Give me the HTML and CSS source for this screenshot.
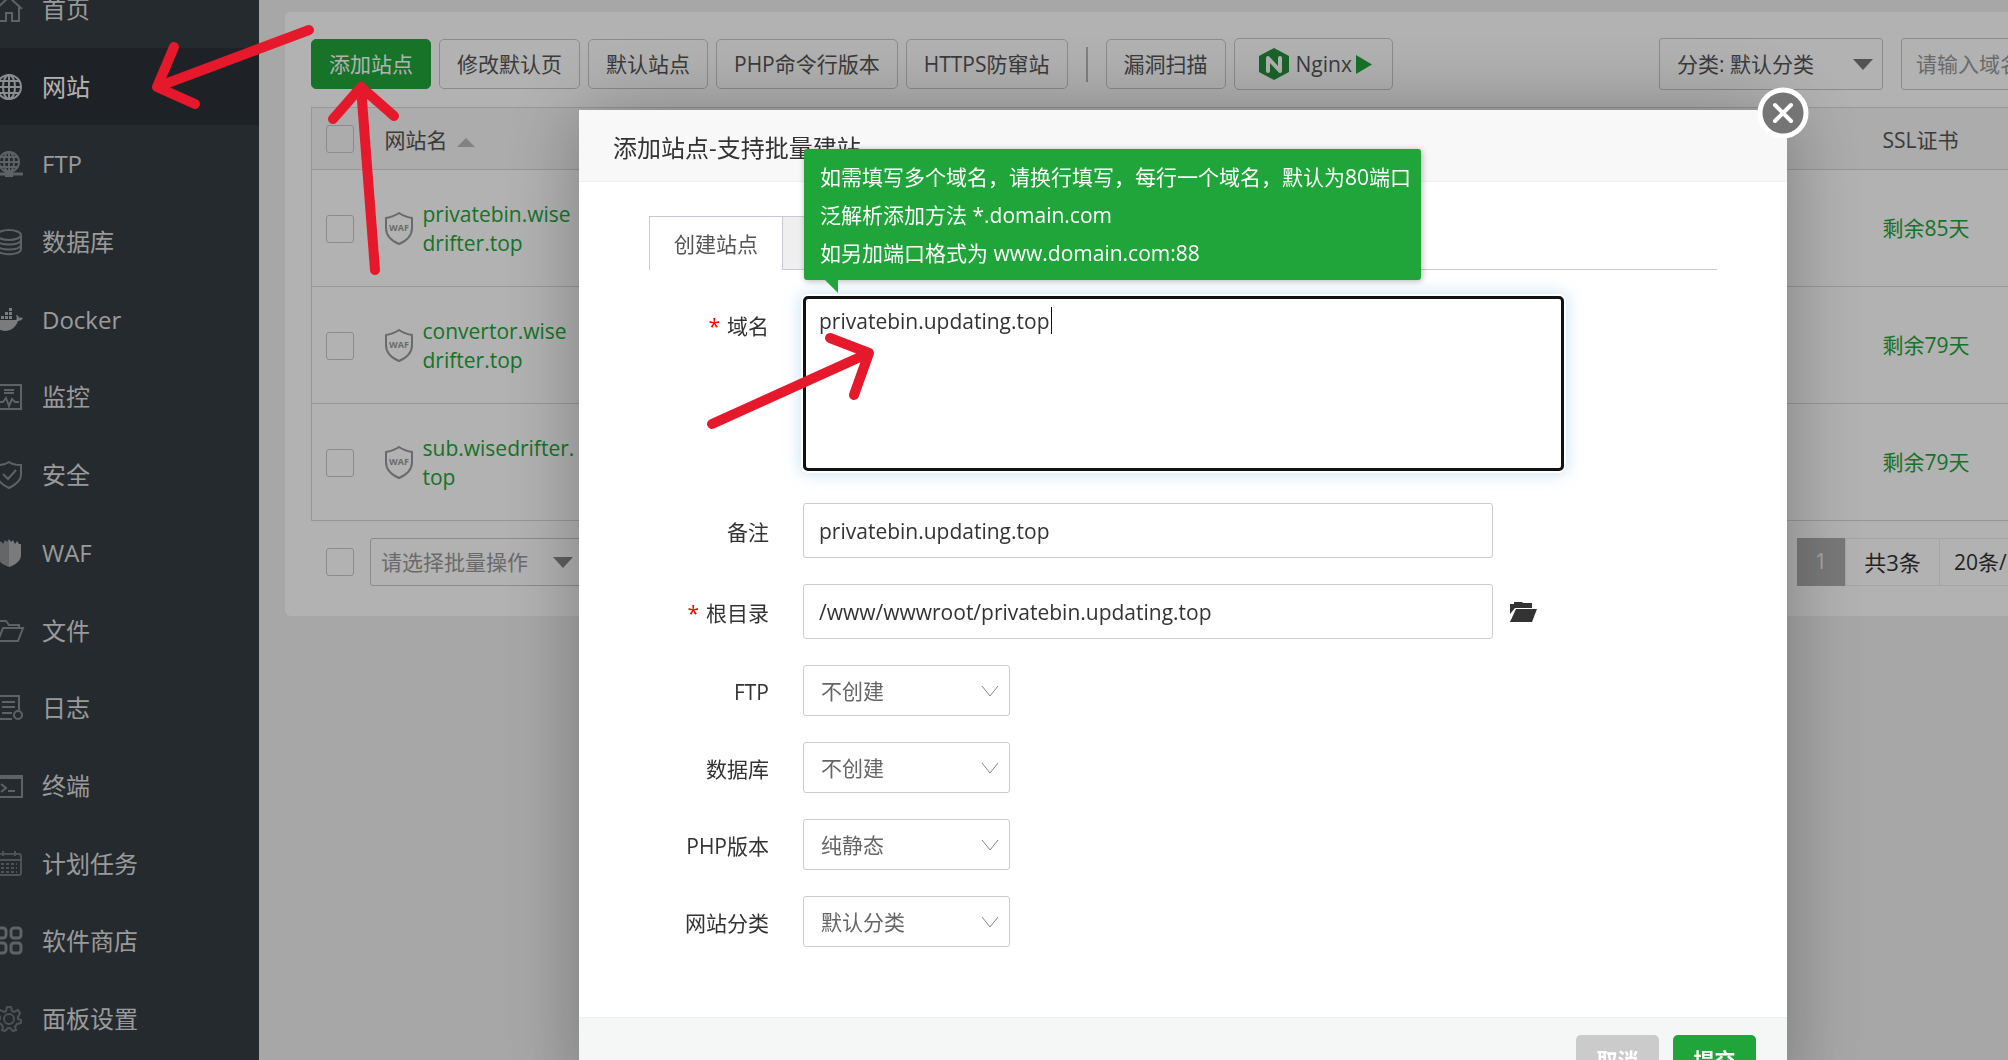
FILE: index.html
```html
<!DOCTYPE html>
<html lang="zh-CN">
<head>
<meta charset="utf-8">
<title>网站 - 添加站点</title>
<link rel="stylesheet" href="styles.css">
</head>
<body>
<div class="app">
  <aside class="sidebar">
    <nav class="nav">
      <a class="nav-item" href="#"><svg class="nav-icon" viewBox="0 0 28 28"><path d="M1 14 14 2l13 12M4 12v14h7v-8h6v8h7V12"/></svg>首页</a>
      <a class="nav-item active" href="#"><svg class="nav-icon bright" viewBox="0 0 28 28"><circle cx="14" cy="14" r="12"/><ellipse cx="14" cy="14" rx="6" ry="12"/><path d="M14 2v24M2 14h24M4 8h20M4 20h20"/></svg>网站</a>
      <a class="nav-item" href="#"><svg class="nav-icon" viewBox="0 0 28 28"><circle cx="14" cy="12" r="10"/><ellipse cx="14" cy="12" rx="5" ry="10"/><path d="M14 2v20M4 12h20M5 7h18M5 17h18"/><path d="M0 24h28" stroke-width="3"/><path d="M10 24h8" stroke-width="6"/></svg>FTP</a>
      <a class="nav-item" href="#"><svg class="nav-icon" viewBox="0 0 28 28"><ellipse cx="14" cy="7" rx="12" ry="5"/><path d="M2 7v14c0 7 24 7 24 0V7M2 12c0 6 24 6 24 0M2 17c0 6 24 6 24 0"/></svg>数据库</a>
      <a class="nav-item" href="#"><svg class="nav-icon solid" viewBox="0 0 28 28"><path d="M0 14h21c1-1 1-3 0-5 2 0 3 2 3 3 1-1 3 0 4 0-1 2-3 3-5 3-2 6-7 10-13 10C4 25 0 21 0 14zM2 10h3v3H2zM6 10h3v3H6zM10 10h3v3h-3zM14 10h3v3h-3zM10 6h3v3h-3zM14 6h3v3h-3zM14 2h3v3h-3z"/></svg>Docker</a>
      <a class="nav-item" href="#"><svg class="nav-icon" viewBox="0 0 28 28"><path d="M2 2h24v24H2zM4 19h4l3-4 3 8 3-7 3 3h4M9 7h10M9 10h10"/></svg>监控</a>
      <a class="nav-item" href="#"><svg class="nav-icon" viewBox="0 0 28 28"><path d="M14 1c4 3 8 3 12 3v10c0 6-6 10-12 13C8 24 2 20 2 14V4c4 0 8 0 12-3zM8 13l5 5 8-9" stroke-width="2"/></svg>安全</a>
      <a class="nav-item" href="#"><svg class="nav-icon solid" viewBox="0 0 28 28"><path d="M14 0l2 3 2-2 2 4 2-3 2 3h2v11c0 6-6 10-12 12z"/><path opacity=".75" d="M14 0l-2 3-2-2-2 4-2-3-2 3H2v11c0 6 6 10 12 12z"/></svg>WAF</a>
      <a class="nav-item" href="#"><svg class="nav-icon" viewBox="0 0 28 28"><path d="M2 24V4h9l3 4h10v3M3 24l5-13h20l-5 13z"/></svg>文件</a>
      <a class="nav-item" href="#"><svg class="nav-icon" viewBox="0 0 28 28"><path d="M24 16V2H3v23h14M7 8h13M7 13h13M7 19h10"/><circle cx="23" cy="21" r="4" stroke-width="2"/></svg>日志</a>
      <a class="nav-item" href="#"><svg class="nav-icon" viewBox="0 0 28 28"><path d="M1 4h26v21H1zM6 12l5 4-5 4M13 19h7" stroke-width="2"/><path d="M1 5h26" stroke-width="4"/></svg>终端</a>
      <a class="nav-item" href="#"><svg class="nav-icon dim" viewBox="0 0 28 28"><rect x="2" y="4" width="24" height="21" rx="2"/><path d="M2 10h24M8 1v5M20 1v5"/><path d="M6 14h16M6 18h16M6 22h16" stroke-dasharray="3 2" stroke-width="2"/></svg>计划任务</a>
      <a class="nav-item" href="#"><svg class="nav-icon" viewBox="0 0 28 28"><g stroke-width="3"><rect x="1" y="1" width="10" height="10" rx="3"/><rect x="16" y="1" width="10" height="10" rx="3"/><rect x="1" y="16" width="10" height="10" rx="3"/><rect x="16" y="16" width="10" height="10" rx="3"/></g></svg>软件商店</a>
      <a class="nav-item" href="#"><svg class="nav-icon dim" viewBox="0 0 28 28"><circle cx="14" cy="14" r="5" stroke-width="2"/><path stroke-width="2" d="M12 2h4l1 4 2 1 4-2 2 3-2 4v2l3 1v3l-4 1-2 3 1 3-3 1-3-3h-2l-3 3-3-1 1-3-2-3-4-1v-3l3-1v-2L3 8l2-3 4 2 2-1z"/></svg>面板设置</a>
    </nav>
  </aside>

  <main class="main">
    <section class="panel">
      <div class="toolbar">
        <button class="btn btn-primary" type="button">添加站点</button>
        <button class="btn" type="button">修改默认页</button>
        <button class="btn" type="button">默认站点</button>
        <button class="btn" type="button">PHP命令行版本</button>
        <button class="btn" type="button">HTTPS防窜站</button>
        <span class="divider"></span>
        <button class="btn" type="button">漏洞扫描</button>
        <button class="btn btn-nginx" type="button"><svg class="nginx-logo" viewBox="0 0 30 32"><path fill="#278f3a" d="M15 0l15 8v16l-15 8L0 24V8z"/><path fill="none" stroke="#fff" stroke-width="4" stroke-linecap="round" stroke-linejoin="round" d="M9 23V10l12 13V10"/></svg>Nginx<svg class="play" viewBox="0 0 17 20"><path d="M0 0l17 10L0 20z"/></svg></button>
        <div class="filters">
          <span class="pick pick-category"><select aria-label="分类"><option>分类: 默认分类</option></select><svg class="caret" viewBox="0 0 20 11"><path d="M0 0h20L10 11z"/></svg></span>
          <input class="search" type="text" aria-label="搜索" placeholder="请输入域名或备注">
        </div>
      </div>

      <table class="sites">
        <colgroup><col class="col-check"><col class="col-name"><col><col class="col-ssl"></colgroup>
        <thead>
          <tr><th><input class="check" type="checkbox" aria-label="全选"></th><th>网站名 <svg class="sort" viewBox="0 0 18 9"><path d="M0 9h18L9 0z"/></svg></th><th></th><th>SSL证书</th></tr>
        </thead>
        <tbody>
          <tr><td><input class="check" type="checkbox" aria-label="privatebin.wisedrifter.top"></td><td><div class="site"><svg class="waf" viewBox="0 0 28 33"><path d="M14 1c4 3 8 4 13 5v10c0 8-6 13-13 16C7 29 1 24 1 16V6c5-1 9-2 13-5z"/><text x="14" y="19" text-anchor="middle">WAF</text></svg><a href="#">privatebin.wise<wbr>drifter.top</a></div></td><td></td><td><a href="#">剩余85天</a></td></tr>
          <tr><td><input class="check" type="checkbox" aria-label="convertor.wisedrifter.top"></td><td><div class="site"><svg class="waf" viewBox="0 0 28 33"><path d="M14 1c4 3 8 4 13 5v10c0 8-6 13-13 16C7 29 1 24 1 16V6c5-1 9-2 13-5z"/><text x="14" y="19" text-anchor="middle">WAF</text></svg><a href="#">convertor.wise<wbr>drifter.top</a></div></td><td></td><td><a href="#">剩余79天</a></td></tr>
          <tr><td><input class="check" type="checkbox" aria-label="sub.wisedrifter.top"></td><td><div class="site"><svg class="waf" viewBox="0 0 28 33"><path d="M14 1c4 3 8 4 13 5v10c0 8-6 13-13 16C7 29 1 24 1 16V6c5-1 9-2 13-5z"/><text x="14" y="19" text-anchor="middle">WAF</text></svg><a href="#">sub.wisedrifter.<wbr>top</a></div></td><td></td><td><a href="#">剩余79天</a></td></tr>
        </tbody>
      </table>

      <div class="table-foot">
        <input class="check" type="checkbox" aria-label="选择全部网站">
        <span class="pick pick-batch"><select aria-label="批量操作"><option>请选择批量操作</option></select><svg class="caret" viewBox="0 0 20 11"><path d="M0 0h20L10 11z"/></svg></span>
        <div class="pager">
          <a class="page-current" href="#">1</a>
          <span class="page-total">共3条</span>
          <select class="page-size" aria-label="每页条数"><option>20条/页</option></select>
        </div>
      </div>
    </section>
  </main>
</div>

<div class="shade"></div>

<div class="modal" role="dialog" aria-labelledby="modal-title">
  <header class="modal-head"><h2 id="modal-title">添加站点-支持批量建站</h2></header>
  <button class="close" type="button" aria-label="关闭"><svg viewBox="0 0 52 52"><circle cx="26" cy="26" r="23" fill="#757575" stroke="#fff" stroke-width="5"/><path d="M18 18l16 16M34 18L18 34" stroke="#fff" stroke-width="4" stroke-linecap="round"/></svg></button>

  <form class="modal-body">
    <div class="tabs">
      <button class="tab current" type="button">创建站点</button>
      <button class="tab tab-batch" type="button" aria-label="批量创建"></button>
    </div>

    <div class="field field-domain">
      <label for="domain"><span class="req">*</span>域名</label>
      <div class="domain-box">
        <textarea id="domain">privatebin.updating.top</textarea>
        <span class="text-caret"></span>
        <div class="tip">如需填写多个域名，请换行填写，每行一个域名，默认为80端口<br>泛解析添加方法 *.domain.com<br>如另加端口格式为 www.domain.com:88<svg class="tip-tail" viewBox="0 0 13 13"><path d="M0 0h13v13z"/></svg></div>
      </div>
    </div>
    <div class="field"><label for="note">备注</label><input id="note" class="text" type="text" value="privatebin.updating.top"></div>
    <div class="field"><label for="root"><span class="req">*</span>根目录</label><input id="root" class="text" type="text" value="/www/wwwroot/privatebin.updating.top"><button class="folder" type="button" aria-label="选择目录"><svg viewBox="0 0 27 20"><path d="M0 12V2h4V0h8l1 1h9v5H5z"/><path d="M6 7h21l-5 13H0z"/></svg></button></div>
    <div class="field"><label for="ftp">FTP</label><span class="choice"><select id="ftp"><option>不创建</option></select><svg viewBox="0 0 18 12"><path d="M1 1l8 10 8-10"/></svg></span></div>
    <div class="field"><label for="db">数据库</label><span class="choice"><select id="db"><option>不创建</option></select><svg viewBox="0 0 18 12"><path d="M1 1l8 10 8-10"/></svg></span></div>
    <div class="field"><label for="php">PHP版本</label><span class="choice"><select id="php"><option>纯静态</option></select><svg viewBox="0 0 18 12"><path d="M1 1l8 10 8-10"/></svg></span></div>
    <div class="field"><label for="type">网站分类</label><span class="choice"><select id="type"><option>默认分类</option></select><svg viewBox="0 0 18 12"><path d="M1 1l8 10 8-10"/></svg></span></div>
  </form>

  <footer class="modal-foot">
    <button class="action action-cancel" type="button">取消</button>
    <button class="action action-submit" type="button">提交</button>
  </footer>
</div>

<svg class="marks" width="900" height="450" viewBox="0 0 900 450">
  <path d="M309 30 157 87M174 47 157 87l38 17"/>
  <path d="M375 270 361 87M333 119l28-32 33 29"/>
  <path d="M712 424 869 353M830 338l39 15-15 42"/>
</svg>
</body>
</html>
```
FILE: styles.css
```css
* { box-sizing: border-box; }

body {
  margin: 0;
  height: 100vh;
  overflow: hidden;
  background: #f0f0f0;
  color: #555;
  font-family: "Open Sans", "Noto Sans CJK SC", sans-serif;
  font-size: 21px;
  line-height: 30px;
}

a { color: #20a53a; text-decoration: none; }
button, input, select, textarea { font: inherit; color: inherit; margin: 0; }
button { cursor: pointer; }
select { appearance: none; background: transparent; border: 0; }

.app { display: flex; height: 100vh; overflow: hidden; }

/* Sidebar, scrolled part of the way down its first entry */
.sidebar { flex: 0 0 259px; height: 100vh; overflow: hidden; background: #363d43; }
.nav {
  display: grid;
  grid-auto-rows: 1fr;
  height: calc(100vh + 28px);
  margin-top: -30px;
}
.nav-item {
  display: flex;
  align-items: center;
  gap: 19px;
  color: #ddd;
  font-size: 24px;
}
.nav-item.active { background: #2c3036; color: #fff; }
.nav-icon {
  width: 28px;
  height: 28px;
  margin-left: -5px;
  fill: none;
  stroke: #888d90;
  stroke-width: 2;
  overflow: visible;
}
.nav-icon.bright { stroke: #c8cacc; }
.nav-icon.dim { stroke: #70767a; }
.nav-icon.solid { fill: #b0b0b0; stroke: none; }

/* Site list */
.main { flex: 1; min-width: 0; padding: 12px 0 0 26px; }
.panel {
  margin-right: -200px;
  padding: 26px 26px 30px;
  background: #fff;
  border-radius: 6px;
}
.toolbar { display: flex; align-items: center; gap: 8px; height: 52px; white-space: nowrap; }
.btn {
  height: 50px;
  padding: 0 17px;
  background: none;
  border: 1px solid #c8c8c8;
  border-radius: 5px;
}
.btn-primary { background: #20a53a; border-color: #20a53a; color: #fff; }
.btn-nginx { display: flex; align-items: center; height: 52px; padding: 0 20px 0 24px; }
.nginx-logo { width: 30px; height: 32px; margin-right: 7px; }
.play { width: 16px; height: 19px; margin-left: 4px; fill: #20a53a; }
.divider { width: 2px; height: 35px; margin: 0 10px; background: #b8b8b8; }
.filters { display: flex; gap: 18px; margin-left: auto; }
.pick {
  display: flex;
  align-items: center;
  position: relative;
  border: 1px solid #c8c8c8;
  border-radius: 3px;
}
.pick select { width: 100%; height: 100%; padding: 0 17px; }
.pick-category { width: 224px; height: 52px; }
.caret { position: absolute; right: 9px; width: 20px; height: 11px; fill: #777; }
.search {
  width: 281px;
  height: 52px;
  padding: 0 14px;
  background: none;
  border: 1px solid #c8c8c8;
  border-radius: 3px;
}
.search::placeholder { color: #999; }

.sites {
  width: 100%;
  margin-top: 17px;
  border: 1px solid #d8d8d8;
  border-collapse: collapse;
  table-layout: fixed;
}
.col-check { width: 73px; }
.col-name { width: 300px; }
.col-ssl { width: 299px; }
.sites th { height: 62px; padding: 3px 0 0; background: #f6f6f6; font-weight: 400; text-align: left; }
.sites td { height: 117px; padding: 1px 0 0; border-top: 1px solid #d8d8d8; line-height: 29px; }
.sites th:first-child { padding-top: 0; }
.sites th:first-child, .sites td:first-child { padding-left: 14px; }
.check {
  display: block;
  appearance: none;
  width: 28px;
  height: 28px;
  border: 1px solid #c8c8c8;
  border-radius: 3px;
}
.sort { width: 18px; height: 9px; margin-left: 4px; vertical-align: middle; fill: #bbb; }
.site { display: flex; align-items: center; gap: 10px; width: 192px; }
.waf { flex: none; width: 28px; height: 33px; fill: none; stroke: #999; stroke-width: 2; }
.waf text { fill: #999; stroke: none; font-size: 9px; font-weight: 700; }

.table-foot { display: flex; align-items: center; height: 48px; margin-top: 17px; padding-left: 15px; }
.pick-batch { width: 230px; height: 48px; margin-left: 16px; color: #999; }
.pick-batch select { padding: 0 10px; }
.pick-batch .caret { right: 26px; fill: #888; }
.pager { display: flex; width: 385px; height: 48px; margin-left: auto; line-height: 46px; color: #333; }
.page-current { width: 48px; background: #aeaeae; color: #eee; text-align: center; }
.page-total { width: 95px; border: 1px solid #ececec; font-size: 22px; text-align: center; }
.page-size { flex: 1; padding: 0 14px; border: 1px solid #ececec; border-left: 0; }

/* Dialog */
.shade { position: fixed; inset: 0; background: rgba(0, 0, 0, .3); }
.modal {
  position: fixed;
  top: 110px;
  left: 579px;
  right: 221px;
  background: #fff;
  border-radius: 3px;
  box-shadow: 1px 1px 80px rgba(0, 0, 0, .3);
  color: #333;
}
.modal-head { height: 72px; padding: 0 34px; background: #f8f8f8; border-bottom: 1px solid #eee; }
.modal-head h2 { margin: 0; font-size: 24px; font-weight: 400; line-height: 76px; }
.close {
  position: absolute;
  top: -23px;
  right: -22px;
  width: 52px;
  height: 52px;
  padding: 0;
  background: none;
  border: 0;
}
.close svg { display: block; fill: none; }
.modal-body { display: grid; gap: 26px; padding: 34px 70px 70px; }

.tabs { display: flex; height: 54px; border-bottom: 1px solid #cbc8d6; }
.tab {
  height: 54px;
  padding: 0 24px;
  background: #efefef;
  border: solid #cbc8d6;
  border-width: 1px 1px 1px 0;
  color: #555;
}
.tab.current { background: #fff; border-width: 1px 1px 0; }
.tab-batch { width: 134px; }

.field { display: flex; align-items: center; gap: 34px; }
.field label { flex: 0 0 120px; padding-top: 3px; text-align: right; white-space: nowrap; }
.req { margin-right: 7px; color: #f00; }
.field-domain { align-items: flex-start; padding-bottom: 6px; }
.field-domain label { padding-top: 15px; }
.domain-box { position: relative; flex: 0 0 761px; }
.domain-box textarea {
  display: block;
  width: 100%;
  height: 175px;
  padding: 7px 13px;
  border: 3px solid #111;
  border-radius: 5px;
  outline: 0;
  resize: none;
  box-shadow: 0 0 0 2px #fff, 0 0 16px 3px rgba(102, 175, 233, .35);
}
.text-caret { position: absolute; top: 11px; left: 248px; width: 1px; height: 27px; background: #111; }
.tip {
  position: absolute;
  bottom: 191px;
  left: 1px;
  width: 617px;
  padding: 9px 16px 8px;
  background: #20a53a;
  border-radius: 3px;
  box-shadow: 1px 1px 6px rgba(0, 0, 0, .3);
  color: #fff;
  line-height: 38px;
  white-space: nowrap;
}
.tip-tail { position: absolute; top: 100%; left: 21px; width: 13px; height: 13px; fill: #20a53a; }
.text { width: 690px; height: 55px; padding: 0 15px; border: 1px solid #ccc; border-radius: 3px; }
.folder { height: 28px; margin-left: -17px; padding: 0; background: none; border: 0; }
.folder svg { display: block; width: 27px; height: 20px; fill: #333; }
.choice {
  display: flex;
  align-items: center;
  position: relative;
  width: 207px;
  height: 51px;
  border: 1px solid #ccc;
  border-radius: 3px;
  color: #666;
}
.choice select { width: 100%; height: 100%; padding: 0 17px; }
.choice svg { position: absolute; right: 10px; width: 18px; height: 12px; fill: none; stroke: #888; stroke-width: 1; }

.modal-foot {
  display: flex;
  justify-content: flex-end;
  gap: 14px;
  padding: 17px 31px;
  background: #f5f7f6;
  border-top: 1px solid #edf0ef;
}
.action { width: 83px; height: 50px; padding: 0; border: 0; border-radius: 5px; color: #fff; font-weight: 700; }
.action-cancel { background: #cbcbcb; }
.action-submit { background: #20a53a; }

/* Hand-drawn pointers over the page */
.marks {
  position: absolute;
  top: 0;
  left: 0;
  fill: none;
  stroke: #e6192c;
  stroke-width: 10;
  stroke-linecap: round;
  stroke-linejoin: round;
  pointer-events: none;
}
```
